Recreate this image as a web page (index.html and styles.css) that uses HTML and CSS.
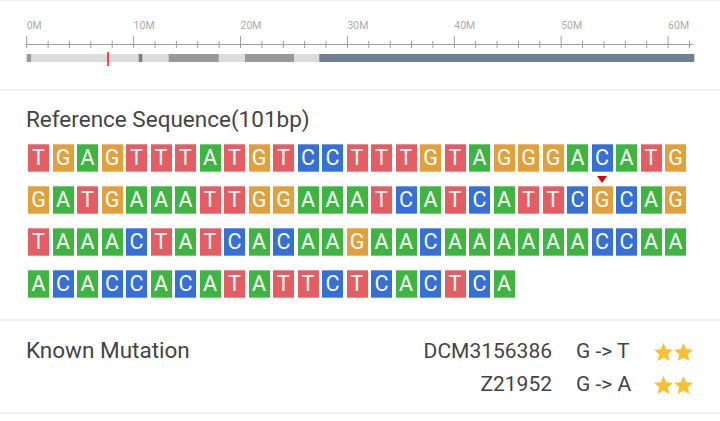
FILE: index.html
```html
<!DOCTYPE html>
<html lang="en">

<head>
    <meta charset="UTF-8">
    <meta name="viewport" content="width=device-width, initial-scale=1.0">
    <title>Sequence Detail</title>
    <link rel="stylesheet" href="styles.css">
</head>

<body>

    <!-- Chromosome Ruler -->
    <div class="panel ruler-panel">
        <svg class="ruler" width="670" height="88" viewBox="0 0 670 88">
            <g class="ruler-labels">
                <text x="0.7" y="28">0M</text>
                <text x="107.6" y="28">10M</text>
                <text x="214.5" y="28">20M</text>
                <text x="321.4" y="28">30M</text>
                <text x="428.3" y="28">40M</text>
                <text x="535.2" y="28">50M</text>
                <text x="642.1" y="28">60M</text>
            </g>
            <path class="ruler-line" d="M0.7 43.5H667.5" />
            <path class="ruler-line" d="M0.7 35V47M107.6 35V47M214.5 35V47M321.4 35V47M428.3 35V47M535.2 35V47M642.1 35V47" />
            <path class="ruler-line" d="M22.1 40V47M43.5 40V47M64.8 40V47M86.2 40V47M129 40V47M150.4 40V47M171.7 40V47M193.1 40V47M235.9 40V47M257.3 40V47M278.6 40V47M300 40V47M342.8 40V47M364.2 40V47M385.5 40V47M406.9 40V47M449.7 40V47M471.1 40V47M492.4 40V47M513.8 40V47M556.6 40V47M578 40V47M599.3 40V47M620.7 40V47M663.5 40V47" />

            <rect x="0.7" y="53" width="667.6" height="8" fill="#dcdcdc" />
            <rect x="0.7" y="53" width="4.3" height="8" fill="#999" />
            <rect x="112.7" y="53" width="3.6" height="8" fill="#6f8092" />
            <rect x="142.7" y="53" width="50" height="8" fill="#999" />
            <rect x="219" y="53" width="49" height="8" fill="#999" />
            <rect x="293.3" y="53" width="375" height="8" fill="#6f8092" />
            <rect x="81.3" y="51" width="1.4" height="14" fill="#f00" />
        </svg>
    </div>

    <!-- Reference Sequence -->
    <div class="panel seq-panel">
        <h2 class="panel-title">Reference Sequence(101bp)</h2>
        <div class="seq-grid">
            <span class="base t">T</span><span class="base g">G</span><span class="base a">A</span><span class="base g">G</span><span class="base t">T</span><span class="base t">T</span><span class="base t">T</span><span class="base a">A</span><span class="base t">T</span><span class="base g">G</span><span class="base t">T</span><span class="base c">C</span><span class="base c">C</span><span class="base t">T</span><span class="base t">T</span><span class="base t">T</span><span class="base g">G</span><span class="base t">T</span><span class="base a">A</span><span class="base g">G</span><span class="base g">G</span><span class="base g">G</span><span class="base a">A</span><span class="base c">C</span><span class="base a">A</span><span class="base t">T</span><span class="base g">G</span>

            <span class="base g">G</span><span class="base a">A</span><span class="base t">T</span><span class="base g">G</span><span class="base a">A</span><span class="base a">A</span><span class="base a">A</span><span class="base t">T</span><span class="base t">T</span><span class="base g">G</span><span class="base g">G</span><span class="base a">A</span><span class="base a">A</span><span class="base a">A</span><span class="base t">T</span><span class="base c">C</span><span class="base a">A</span><span class="base t">T</span><span class="base c">C</span><span class="base a">A</span><span class="base t">T</span><span class="base t">T</span><span class="base c">C</span><span class="base g marked">G<span class="marker"></span></span><span class="base c">C</span><span class="base a">A</span><span class="base g">G</span>

            <span class="base t">T</span><span class="base a">A</span><span class="base a">A</span><span class="base a">A</span><span class="base c">C</span><span class="base t">T</span><span class="base a">A</span><span class="base t">T</span><span class="base c">C</span><span class="base a">A</span><span class="base c">C</span><span class="base a">A</span><span class="base a">A</span><span class="base g">G</span><span class="base a">A</span><span class="base a">A</span><span class="base c">C</span><span class="base a">A</span><span class="base a">A</span><span class="base a">A</span><span class="base a">A</span><span class="base a">A</span><span class="base a">A</span><span class="base c">C</span><span class="base c">C</span><span class="base a">A</span><span class="base a">A</span>

            <span class="base a">A</span><span class="base c">C</span><span class="base a">A</span><span class="base c">C</span><span class="base c">C</span><span class="base a">A</span><span class="base c">C</span><span class="base a">A</span><span class="base t">T</span><span class="base a">A</span><span class="base t">T</span><span class="base t">T</span><span class="base c">C</span><span class="base t">T</span><span class="base c">C</span><span class="base a">A</span><span class="base c">C</span><span class="base t">T</span><span class="base c">C</span><span class="base a">A</span>
        </div>
    </div>

    <!-- Known Mutation -->
    <div class="panel mut-panel">
        <h2 class="panel-title">Known Mutation</h2>
        <div class="mut-table">
            <span class="mut-id">DCM3156386</span>
            <span class="mut-change">G -&gt; T</span>
            <span class="stars">
                <svg class="star" viewBox="2 2 20 19"><path d="M12 17.27L18.18 21l-1.64-7.03L22 9.24l-7.19-.61L12 2 9.19 8.63 2 9.24l5.46 4.73L5.82 21z" /></svg>
                <svg class="star" viewBox="2 2 20 19"><path d="M12 17.27L18.18 21l-1.64-7.03L22 9.24l-7.19-.61L12 2 9.19 8.63 2 9.24l5.46 4.73L5.82 21z" /></svg>
            </span>

            <span class="mut-id">Z21952</span>
            <span class="mut-change">G -&gt; A</span>
            <span class="stars">
                <svg class="star" viewBox="2 2 20 19"><path d="M12 17.27L18.18 21l-1.64-7.03L22 9.24l-7.19-.61L12 2 9.19 8.63 2 9.24l5.46 4.73L5.82 21z" /></svg>
                <svg class="star" viewBox="2 2 20 19"><path d="M12 17.27L18.18 21l-1.64-7.03L22 9.24l-7.19-.61L12 2 9.19 8.63 2 9.24l5.46 4.73L5.82 21z" /></svg>
            </span>
        </div>
    </div>

</body>

</html>
```

FILE: styles.css
```css
/* Global Reset */
* {
    margin: 0;
    padding: 0;
    box-sizing: border-box;
}

/* Body */
body {
    font-family: 'Roboto', 'Liberation Sans', sans-serif;
    background-color: #fff;
    color: #444;
    width: 720px;
}

/* Panels */
.panel {
    border-bottom: 2px solid #f2f2f2;
}

.panel-title {
    font-size: 22.5px;
    font-weight: 400;
    line-height: 24px;
    color: #444;
    white-space: nowrap;
}

/* Ruler */
.ruler-panel {
    border-top: 1px solid #f2f2f2;
    padding-left: 26px;
}

.ruler {
    display: block;
}

.ruler-labels text {
    font-family: 'Roboto', sans-serif;
    font-size: 10.5px;
    fill: #aaa;
}

.ruler-line {
    stroke: #9e9e9e;
    stroke-width: 1;
    fill: none;
}

/* Sequence */
.seq-panel {
    padding: 16px 26px 21px;
}

.seq-panel .panel-title {
    margin-bottom: 13px;
}

.seq-grid {
    display: grid;
    grid-template-columns: repeat(27, 21px);
    column-gap: 3.5px;
    row-gap: 14px;
    margin-left: 2px;
}

.base {
    position: relative;
    height: 28px;
    color: #fff;
    font-size: 21.5px;
    line-height: 28px;
    text-align: center;
    box-shadow: inset 0 1px rgba(255, 255, 255, 0.3), inset 0 -1px rgba(255, 255, 255, 0.3);
}

.base.t { background-color: #e35d62; }
.base.g { background-color: #e2a03b; }
.base.a { background-color: #3eb540; }
.base.c { background-color: #3570d9; }

.marker {
    position: absolute;
    top: -10px;
    left: 50%;
    transform: translateX(-50%);
    border-left: 5px solid transparent;
    border-right: 5px solid transparent;
    border-top: 7px solid #e60000;
}

/* Mutations */
.mut-panel {
    display: flex;
    justify-content: space-between;
    align-items: flex-start;
    padding: 14px 27px 11px 26px;
}

.mut-panel .panel-title {
    line-height: 31px;
}

.mut-table {
    display: grid;
    grid-template-columns: auto 54px auto;
    column-gap: 24px;
    font-size: 21px;
    line-height: 33px;
    white-space: nowrap;
}

.mut-id {
    text-align: right;
}

.stars {
    display: flex;
    align-items: center;
    gap: 1px;
}

.star {
    width: 19px;
    height: 18px;
    fill: #fcc02c;
}
```
